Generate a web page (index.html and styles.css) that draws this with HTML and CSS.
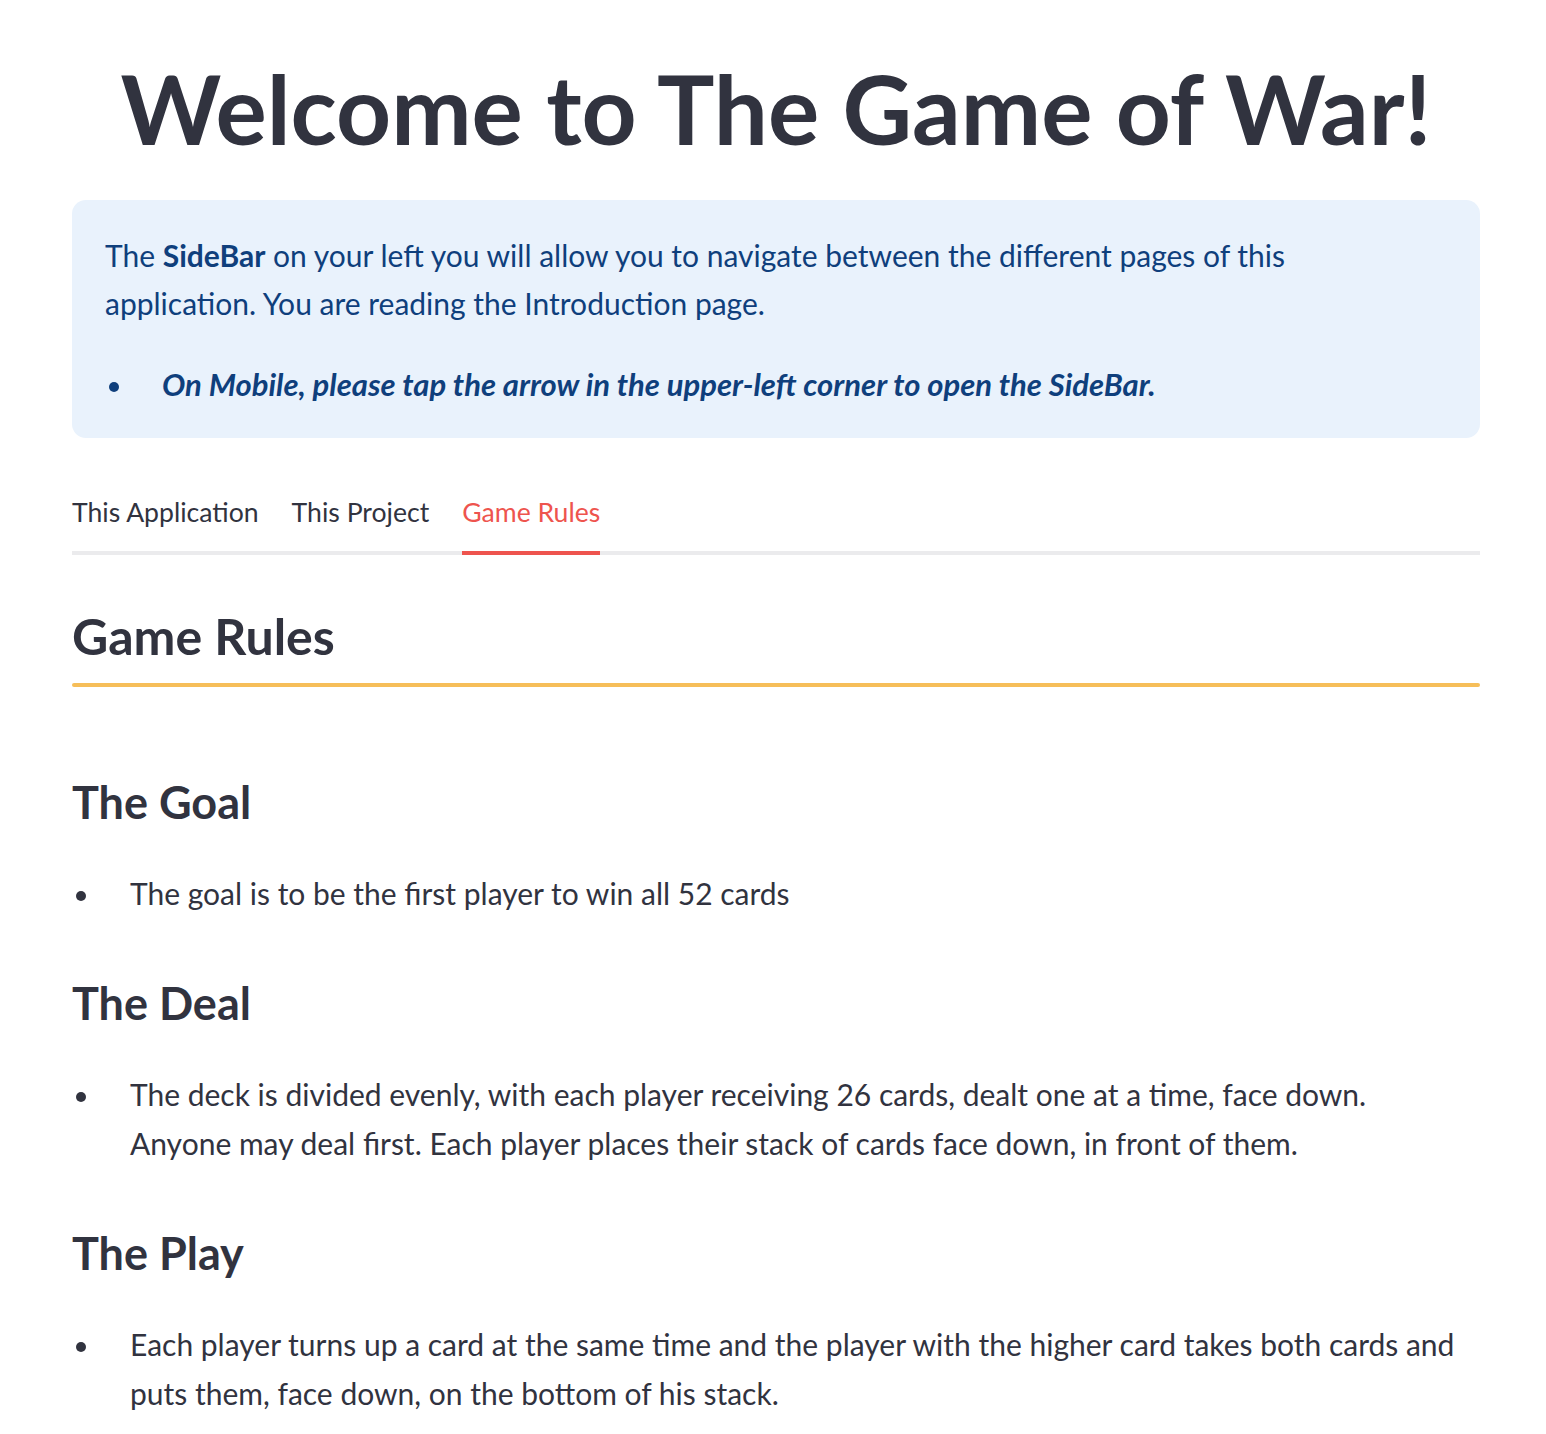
FILE: index.html
```html
<!DOCTYPE html>
<html lang="en">
<head>
<meta charset="utf-8">
<title>Welcome to The Game of War!</title>
<link rel="stylesheet" href="styles.css">
</head>
<body>
<main class="main">
  <h1 class="title">Welcome to The Game of War!</h1>

  <div class="info">
    <p class="info-text">The <strong>SideBar</strong> on your left you will allow you to navigate between the different pages of this application. You are reading the Introduction page.</p>
    <ul class="info-list">
      <li><strong><em>On Mobile, please tap the arrow in the upper-left corner to open the SideBar.</em></strong></li>
    </ul>
  </div>

  <nav class="tabs">
    <span class="tab">This Application</span>
    <span class="tab">This Project</span>
    <span class="tab tab-active">Game Rules</span>
  </nav>

  <section class="panel">
    <h2 class="section-title">Game Rules</h2>
    <div class="divider"></div>

    <h3 class="sub first">The Goal</h3>
    <ul class="rules">
      <li>The goal is to be the first player to win all 52 cards</li>
    </ul>

    <h3 class="sub">The Deal</h3>
    <ul class="rules">
      <li>The deck is divided evenly, with each player receiving 26 cards, dealt one at a time, face down. Anyone may deal first. Each player places their stack of cards face down, in front of them.</li>
    </ul>

    <h3 class="sub">The Play</h3>
    <ul class="rules">
      <li>Each player turns up a card at the same time and the player with the higher card takes both cards and puts them, face down, on the bottom of his stack.</li>
    </ul>
  </section>
</main>
</body>
</html>
```

FILE: styles.css
```css
* { box-sizing: border-box; }

html, body {
  margin: 0;
  padding: 0;
  background: #ffffff;
}

body {
  font-family: "Lato", "Source Sans Pro", "Liberation Sans", sans-serif;
  color: #31333f;
  font-size: 30px;
}

.main {
  padding: 53px 66px 0 72px;
}

.title {
  margin: 0;
  font-size: 96px;
  line-height: 110px;
  font-weight: 700;
  text-align: center;
  color: #31333f;
}

.info {
  margin-top: 37px;
  background: #e9f2fc;
  border-radius: 14px;
  padding: 31px 60px 30px 33px;
  color: #0f3f7c;
}

.info-text {
  margin: 0;
  line-height: 48px;
}

.info-text strong { font-weight: 700; }

.info-list {
  margin: 33px 0 0 0;
  padding: 0;
  list-style: none;
  line-height: 48px;
}

.info-list li,
.rules li {
  display: grid;
  grid-template-columns: 57px 1fr;
}

.info-list li::before,
.rules li::before {
  content: "";
  width: 10px;
  height: 10px;
  border-radius: 50%;
  background: currentColor;
  margin-left: 4px;
  margin-top: 22px;
}

.info-list li strong {
  font-weight: 700;
  font-size: 31px;
}

.tabs {
  margin-top: 54px;
  display: flex;
  gap: 33px;
  border-bottom: 4px solid #ebebed;
}

.tab {
  font-size: 26.6px;
  line-height: 40px;
  padding-bottom: 19px;
  margin-bottom: -4px;
  border-bottom: 4px solid transparent;
  color: #31333f;
}

.tab-active {
  color: #ee544e;
  border-bottom-color: #ee544e;
}

.section-title {
  margin: 51px 0 0 0;
  font-size: 50px;
  line-height: 60px;
  font-weight: 700;
}

.divider {
  margin-top: 17px;
  height: 4px;
  border-radius: 2px;
  background: #f6be59;
}

.sub {
  margin: 58px 0 0 0;
  font-size: 45px;
  line-height: 54px;
  font-weight: 700;
}

.sub.first { margin-top: 88px; }

.rules {
  margin: 40px 0 0 0;
  padding: 0 14px 0 0;
  list-style: none;
  line-height: 49px;
}

.rules li {
  grid-template-columns: 58px 1fr;
}

.rules li::before {
  margin-left: 4px;
}
```
